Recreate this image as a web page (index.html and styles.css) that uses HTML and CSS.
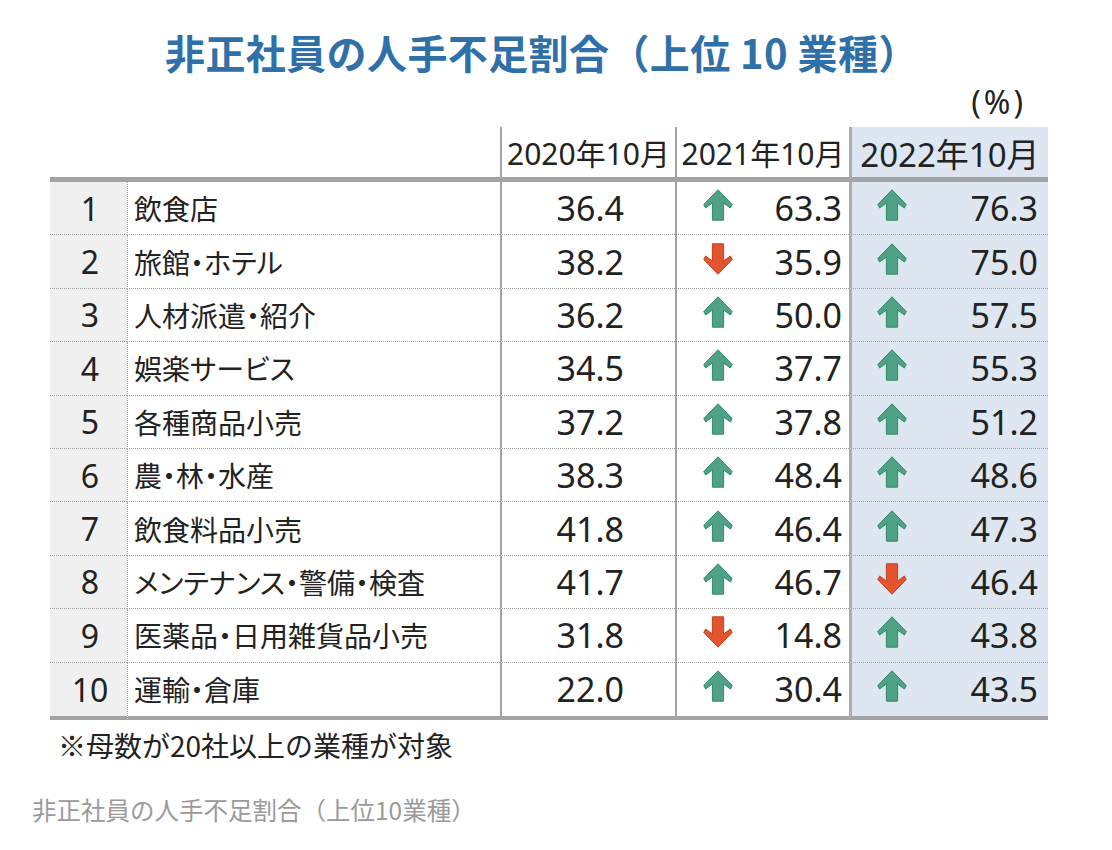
FILE: index.html
```html
<!DOCTYPE html>
<html lang="ja">
<head>
<meta charset="utf-8">
<title>非正社員の人手不足割合（上位10業種）</title>
<link rel="stylesheet" href="styles.css">
</head>
<body>
<svg class="defs" width="0" height="0" aria-hidden="true">
  <defs>
    <symbol id="up" viewBox="0 0 30 32">
      <polygon points="15,0.8 29.2,15.5 27.4,19 20.6,14 20.6,31.2 9.4,31.2 9.4,14 2.6,19 0.8,15.5" />
    </symbol>
    <symbol id="down" viewBox="0 0 30 32">
      <polygon points="15,31.2 29.2,16.5 27.4,13 20.6,18 20.6,0.8 9.4,0.8 9.4,18 2.6,13 0.8,16.5" />
    </symbol>
  </defs>
</svg>
<div class="page">
  <h1 class="title">非正社員の人手不足割合（上位 10 業種）</h1>
  <div class="unit">(%)</div>
  <div class="grid">
    <div class="hd blank"></div>
    <div class="hd c3">2020年10月</div>
    <div class="hd c4">2021年10月</div>
    <div class="hd c5 big">2022年10月</div>

    <div class="row"><div class="rk">1</div><div class="nm">飲食店</div><div class="v3">36.4</div><div class="v4"><svg class="arr up"><use href="#up"/></svg><span>63.3</span></div><div class="v5"><svg class="arr up"><use href="#up"/></svg><span>76.3</span></div></div>
    <div class="row"><div class="rk">2</div><div class="nm">旅館・ホテル</div><div class="v3">38.2</div><div class="v4"><svg class="arr down"><use href="#down"/></svg><span>35.9</span></div><div class="v5"><svg class="arr up"><use href="#up"/></svg><span>75.0</span></div></div>
    <div class="row"><div class="rk">3</div><div class="nm">人材派遣・紹介</div><div class="v3">36.2</div><div class="v4"><svg class="arr up"><use href="#up"/></svg><span>50.0</span></div><div class="v5"><svg class="arr up"><use href="#up"/></svg><span>57.5</span></div></div>
    <div class="row"><div class="rk">4</div><div class="nm">娯楽サービス</div><div class="v3">34.5</div><div class="v4"><svg class="arr up"><use href="#up"/></svg><span>37.7</span></div><div class="v5"><svg class="arr up"><use href="#up"/></svg><span>55.3</span></div></div>
    <div class="row"><div class="rk">5</div><div class="nm">各種商品小売</div><div class="v3">37.2</div><div class="v4"><svg class="arr up"><use href="#up"/></svg><span>37.8</span></div><div class="v5"><svg class="arr up"><use href="#up"/></svg><span>51.2</span></div></div>
    <div class="row"><div class="rk">6</div><div class="nm">農・林・水産</div><div class="v3">38.3</div><div class="v4"><svg class="arr up"><use href="#up"/></svg><span>48.4</span></div><div class="v5"><svg class="arr up"><use href="#up"/></svg><span>48.6</span></div></div>
    <div class="row"><div class="rk">7</div><div class="nm">飲食料品小売</div><div class="v3">41.8</div><div class="v4"><svg class="arr up"><use href="#up"/></svg><span>46.4</span></div><div class="v5"><svg class="arr up"><use href="#up"/></svg><span>47.3</span></div></div>
    <div class="row"><div class="rk">8</div><div class="nm">メンテナンス・警備・検査</div><div class="v3">41.7</div><div class="v4"><svg class="arr up"><use href="#up"/></svg><span>46.7</span></div><div class="v5"><svg class="arr down"><use href="#down"/></svg><span>46.4</span></div></div>
    <div class="row"><div class="rk">9</div><div class="nm">医薬品・日用雑貨品小売</div><div class="v3">31.8</div><div class="v4"><svg class="arr down"><use href="#down"/></svg><span>14.8</span></div><div class="v5"><svg class="arr up"><use href="#up"/></svg><span>43.8</span></div></div>
    <div class="row last"><div class="rk">10</div><div class="nm">運輸・倉庫</div><div class="v3">22.0</div><div class="v4"><svg class="arr up"><use href="#up"/></svg><span>30.4</span></div><div class="v5"><svg class="arr up"><use href="#up"/></svg><span>43.5</span></div></div>
  </div>
  <p class="note">※母数が20社以上の業種が対象</p>
  <p class="caption">非正社員の人手不足割合（上位10業種）</p>
</div>
</body>
</html>
```

FILE: styles.css
```css
* { box-sizing: border-box; }
html, body { margin: 0; padding: 0; background: #fff; }
body {
  font-family: "Noto Sans", "Noto Sans CJK JP", sans-serif;
  color: #222;
}
.defs { position: absolute; width: 0; height: 0; overflow: hidden; }
.page { padding-top: 28px; }

.title {
  margin: 0 0 0 165px;
  font-family: "Noto Sans CJK JP", sans-serif;
  font-size: 40px;
  font-weight: 700;
  line-height: 48px;
  letter-spacing: 0.4px;
  color: #3070a8;
  white-space: nowrap;
}

.unit {
  width: 998px;
  margin-left: 50px;
  height: 51px;
  padding: 4px 22px 0 0;
  text-align: right;
  font-size: 32px;
  line-height: 44px;
  letter-spacing: 3px;
  color: #222;
}

.grid {
  width: 998px;
  margin-left: 50px;
  display: grid;
  grid-template-columns: 77px 373px 175px 174px 199px;
}
.row { display: contents; }

.hd {
  height: 55px;
  border-bottom: 5px solid #a3a3a3;
  display: flex;
  align-items: center;
  justify-content: center;
  font-size: 30px;
  white-space: nowrap;
  padding-bottom: 1px;
}
.hd.blank { grid-column: span 2; }
.hd.c3, .hd.c4 { border-left: 2px solid #a3a3a3; }
.hd.c5 { border-left: 3px solid #a8adb3; background: #dee7f1; }
.hd.big { font-size: 33px; padding-top: 2px; }

.row > div {
  height: 53.4px;
  border-bottom: 1px dotted #a0a0a0;
  display: flex;
  align-items: center;
  white-space: nowrap;
}
.row.last > div {
  height: 57.4px;
  border-bottom: 4px solid #a3a3a3;
}

.rk {
  background: #f0f0f0;
  justify-content: center;
  font-size: 32px;
  padding-left: 3px;
}
.nm {
  border-left: 1px dotted #a8a8a8;
  padding-left: 6px;
  font-family: "Noto Sans CJK JP", sans-serif;
  font-size: 28px;
  font-feature-settings: "palt";
}
.v3, .v4, .v5 { font-size: 34px; }
.v3 {
  border-left: 2px solid #a3a3a3;
  justify-content: flex-end;
  padding-right: 51px;
}
.v4 {
  border-left: 2px solid #a3a3a3;
  justify-content: space-between;
  padding: 0 7px 0 26px;
}
.v5 {
  border-left: 3px solid #a8adb3;
  background: #dee7f1;
  justify-content: space-between;
  padding: 0 10px 0 25px;
}

.arr {
  width: 30px;
  height: 32px;
  flex: none;
  margin-top: -6px;
}
.arr.up { fill: #4fa384; stroke: #2f8a68; stroke-width: 1; }
.arr.down { fill: #e2552f; stroke: #c63f1e; stroke-width: 1; }

.note {
  margin: 7px 0 0 58px;
  font-family: "Noto Sans CJK JP", sans-serif;
  font-size: 28px;
  line-height: 36px;
  color: #222;
}
.caption {
  margin: 30px 0 0 32px;
  font-family: "Noto Sans CJK JP", sans-serif;
  font-size: 24.5px;
  line-height: 34px;
  color: #9a9a9a;
}
```
